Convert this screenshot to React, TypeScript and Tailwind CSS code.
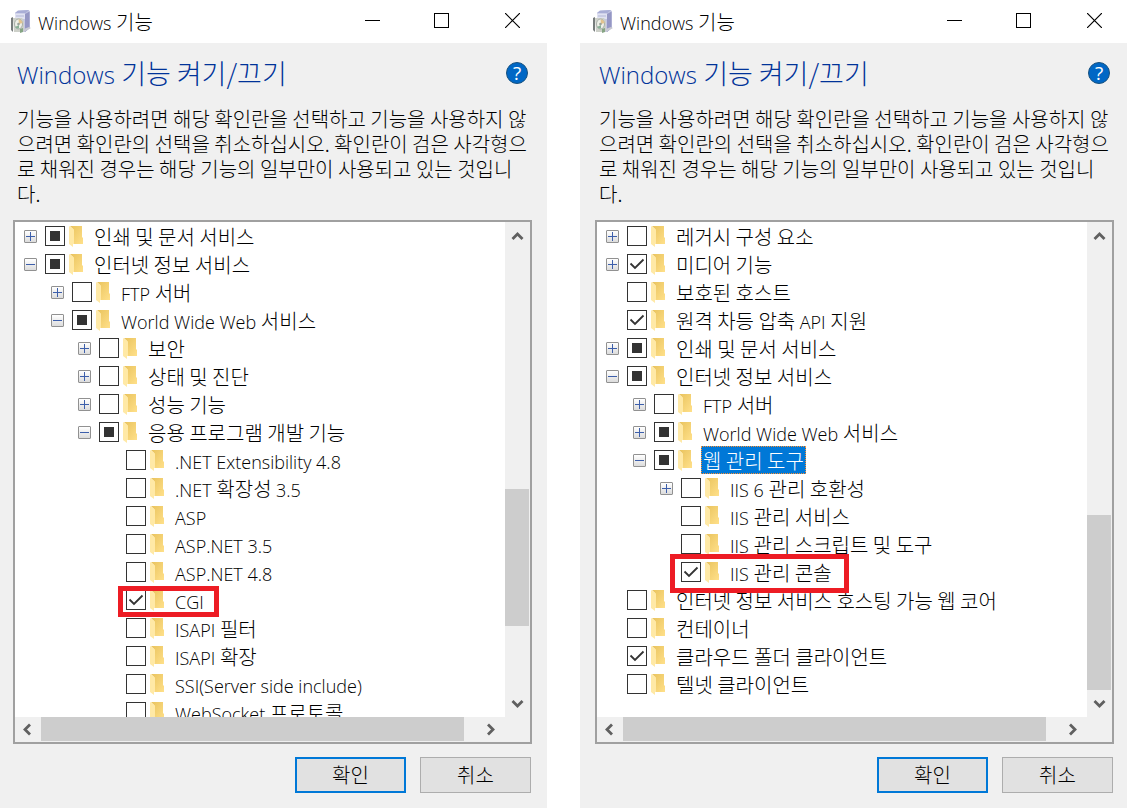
import React, { useEffect, useRef } from "react";

type State = "off" | "on" | "partial";
type Item = {
  text: string;
  level: number;
  state: State;
  toggle?: "plus" | "minus";
  selected?: boolean;
  mark?: string;
};

const leftItems: Item[] = [
  { text: "인쇄 및 문서 서비스", level: 0, state: "partial", toggle: "plus" },
  { text: "인터넷 정보 서비스", level: 0, state: "partial", toggle: "minus" },
  { text: "FTP 서버", level: 1, state: "off", toggle: "plus" },
  { text: "World Wide Web 서비스", level: 1, state: "partial", toggle: "minus" },
  { text: "보안", level: 2, state: "off", toggle: "plus" },
  { text: "상태 및 진단", level: 2, state: "off", toggle: "plus" },
  { text: "성능 기능", level: 2, state: "off", toggle: "plus" },
  { text: "응용 프로그램 개발 기능", level: 2, state: "partial", toggle: "minus" },
  { text: ".NET Extensibility 4.8", level: 3, state: "off" },
  { text: ".NET 확장성 3.5", level: 3, state: "off" },
  { text: "ASP", level: 3, state: "off" },
  { text: "ASP.NET 3.5", level: 3, state: "off" },
  { text: "ASP.NET 4.8", level: 3, state: "off" },
  { text: "CGI", level: 3, state: "on", mark: "left-[103px] top-0 h-[31px] w-[101px]" },
  { text: "ISAPI 필터", level: 3, state: "off" },
  { text: "ISAPI 확장", level: 3, state: "off" },
  { text: "SSI(Server side include)", level: 3, state: "off" },
  { text: "WebSocket 프로토콜", level: 3, state: "off" },
];

const rightItems: Item[] = [
  { text: "레거시 구성 요소", level: 0, state: "off", toggle: "plus" },
  { text: "미디어 기능", level: 0, state: "on", toggle: "plus" },
  { text: "보호된 호스트", level: 0, state: "off" },
  { text: "원격 차등 압축 API 지원", level: 0, state: "on" },
  { text: "인쇄 및 문서 서비스", level: 0, state: "partial", toggle: "plus" },
  { text: "인터넷 정보 서비스", level: 0, state: "partial", toggle: "minus" },
  { text: "FTP 서버", level: 1, state: "off", toggle: "plus" },
  { text: "World Wide Web 서비스", level: 1, state: "partial", toggle: "plus" },
  { text: "웹 관리 도구", level: 1, state: "partial", toggle: "minus", selected: true },
  { text: "IIS 6 관리 호환성", level: 2, state: "off", toggle: "plus" },
  { text: "IIS 관리 서비스", level: 2, state: "off" },
  { text: "IIS 관리 스크립트 및 도구", level: 2, state: "off" },
  { text: "IIS 관리 콘솔", level: 2, state: "on", mark: "left-[73px] -top-1 h-[39px] w-[179px]" },
  { text: "인터넷 정보 서비스 호스팅 가능 웹 코어", level: 0, state: "off" },
  { text: "컨테이너", level: 0, state: "off" },
  { text: "클라우드 폴더 클라이언트", level: 0, state: "on" },
  { text: "텔넷 클라이언트", level: 0, state: "off" },
];

const indents = ["pl-[9px]", "pl-[36px]", "pl-[63px]", "pl-[90px]"];

/* Latin runs, with the space after them, are set in a slightly smaller Latin face beside the Hangul. */
function Mixed({ text }: { text: string }) {
  const parts = text.split(/([\x21-\x7e]+(?: [\x21-\x7e]+)* ?)/);
  return (
    <>
      {parts.map((part, i) =>
        i % 2 ? (
          <span key={i} className="font-['Open_Sans',sans-serif] text-[18px] leading-none">
            {part}
          </span>
        ) : (
          part
        ),
      )}
    </>
  );
}

function AppIcon() {
  return (
    <svg width="22" height="24" viewBox="0 0 22 24" aria-hidden="true">
      <path d="M5 3 8 1l11-1 1 2v16l-5 4-10-1z" fill="#c3c5e2" />
      <path d="M5 3 8 .5 19 0l-4 3.500z" fill="#a9aed6" />
      <path d="M15 4l4.500-2.500V18l-4.500 4z" fill="#9597c4" />
      <path d="M5 3.500h10V9H5z" fill="#e0e2f2" />
      <path d="M6 6h8" stroke="#b4b8d6" />
      <path d="M1 8l2-1v15l-2-2z" fill="#777c7c" />
      <path d="M3 8h9l2 3v9l-3 2H4z" fill="#cdd0c9" />
      <ellipse cx="8.500" cy="14" rx="4" ry="5" fill="#eef0e8" stroke="#aab0aa" />
      <path d="M8.500 9.500a4 4 0 0 1 4 3.500L9 14z" fill="#e3c38d" />
      <path d="M5 17a4 4 0 0 0 4 1.500V15z" fill="#8ab197" />
      <circle cx="8.500" cy="14" r="1.300" fill="#9ba19c" />
      <path d="M11 20l8-3 2 1-7 4z" fill="#c9cad2" />
      <path d="M10 19l3-1v4l-3 1z" fill="#86a584" />
    </svg>
  );
}

function Folder() {
  return (
    <svg width="14" height="22" viewBox="0 0 14 22" className="ml-1 mr-[9px] mt-0.5 shrink-0" aria-hidden="true">
      <defs>
        <linearGradient id="folder-back" x1="0" y1="0" x2="1" y2="1">
          <stop offset="0" stopColor="#e9c35d" />
          <stop offset="1" stopColor="#ffe08a" />
        </linearGradient>
      </defs>
      <path d="M1 0h12v11l1 1v6H4V3z" fill="url(#folder-back)" />
      <path d="M0 0l5 3.500V18H4v3L0 18z" fill="#ffe9a6" />
    </svg>
  );
}

function Expander({ kind }: { kind: "plus" | "minus" }) {
  return (
    <button
      type="button"
      aria-label={kind === "plus" ? "확장" : "축소"}
      className="flex size-[13px] items-center justify-center rounded-[1px] border border-[#919191] bg-linear-to-b from-white to-[#dcdcdc]"
    >
      <svg width="11" height="11" viewBox="0 0 11 11" shapeRendering="crispEdges" aria-hidden="true">
        <path d={kind === "plus" ? "M1 5.500h9M5.500 1v9" : "M1 5.500h9"} stroke="#3d5fab" />
      </svg>
    </button>
  );
}

function Check({ id, state }: { id: string; state: State }) {
  const ref = useRef<HTMLInputElement>(null);
  useEffect(() => {
    if (ref.current) ref.current.indeterminate = state === "partial";
  }, [state]);
  return (
    <span className="grid size-5 shrink-0 place-items-center">
      <input
        ref={ref}
        id={id}
        type="checkbox"
        defaultChecked={state === "on"}
        className="peer col-start-1 row-start-1 size-5 appearance-none border border-[#333] bg-white"
      />
      <span className="pointer-events-none col-start-1 row-start-1 hidden size-[10px] bg-[#333] peer-indeterminate:block" />
      <svg
        width="20"
        height="20"
        viewBox="0 0 20 20"
        className="pointer-events-none col-start-1 row-start-1 hidden peer-checked:block"
        aria-hidden="true"
      >
        <path d="M3.500 9.500l4.500 4.500 8.500-8.500" fill="none" stroke="#333" strokeWidth="1.800" />
      </svg>
    </span>
  );
}

function Row({ item, id }: { item: Item; id: string }) {
  return (
    <li className={`relative flex h-7 items-center whitespace-nowrap ${indents[item.level]}`}>
      <span className="mr-2 w-[13px] shrink-0">{item.toggle && <Expander kind={item.toggle} />}</span>
      <Check id={id} state={item.state} />
      <Folder />
      <label
        htmlFor={id}
        className={
          item.selected
            ? "h-7 border border-dotted border-[#ff9030] bg-[#0078d7] px-px leading-7 text-white"
            : "h-7 px-0.5 leading-[30px]"
        }
      >
        <Mixed text={item.text} />
      </label>
      {item.mark && <span className={`pointer-events-none absolute z-10 border-[5px] border-[#ed1c24] ${item.mark}`} />}
    </li>
  );
}

function Arrow({ dir, label }: { dir: "up" | "down" | "left" | "right"; label: string }) {
  const paths = {
    up: "M7.500 17l5-5 5 5",
    down: "M7.500 10l5 5 5-5",
    left: "M15 7.500l-5 5 5 5",
    right: "M10 7.500l5 5-5 5",
  };
  return (
    <button type="button" aria-label={label} className="size-[25px] shrink-0">
      <svg width="25" height="25" viewBox="0 0 25 25" aria-hidden="true">
        <path d={paths[dir]} fill="none" stroke="#606060" strokeWidth="2.800" />
      </svg>
    </button>
  );
}

type WindowProps = { name: string; items: Item[]; thumb: string; edge: string };

function FeatureWindow({ name, items, thumb, edge }: WindowProps) {
  return (
    <section className="min-w-0 flex-1">
      <div className={edge}>
        <header className="flex h-[43px] items-center pl-2.5">
          <AppIcon />
          <h1 className="ml-1.5 flex-1">
            <Mixed text="Windows 기능" />
          </h1>
          <button type="button" aria-label="최소화" className="grid h-[41px] w-[61px] place-items-center self-start">
            <svg width="15" height="15" viewBox="0 0 15 15" shapeRendering="crispEdges">
              <path d="M0 7.500h15" stroke="#000" />
            </svg>
          </button>
          <button type="button" aria-label="최대화" className="grid h-[41px] w-[77px] place-items-center self-start">
            <svg width="15" height="15" viewBox="0 0 15 15" shapeRendering="crispEdges">
              <path d="M.5.5h14v14H.5z" fill="none" stroke="#000" />
            </svg>
          </button>
          <button type="button" aria-label="닫기" className="grid h-[41px] w-[65px] place-items-center self-start">
            <svg width="15" height="15" viewBox="0 0 15 15">
              <path d="M0 0l15 15M15 0L0 15" stroke="#000" strokeWidth="1.200" />
            </svg>
          </button>
        </header>
      </div>
      <div className={`bg-[#f0f0f0] ${edge}`}>
        <div className="pl-[17px] pr-[15px] pt-3">
          <div className="flex h-9 items-center justify-between pr-0.5">
            <h2 className="text-[27px] leading-9 text-[#003399]">
              <span className="font-['Open_Sans',sans-serif] text-[24px] leading-none">Windows </span>기능 켜기/끄기
            </h2>
            <button
              type="button"
              aria-label="도움말"
              className="flex size-[22px] items-center justify-center rounded-full border border-[#17517f] bg-[#0067c5] font-['Open_Sans',sans-serif] text-[19px] font-normal leading-5 text-white"
            >
              ?
            </button>
          </div>
          <p className="mt-[15px] leading-[25px]">
            기능을 사용하려면 해당 확인란을 선택하고 기능을 사용하지 않으려면 확인란의 선택을 취소하십시오. 확인란이
            검은 사각형으로 채워진 경우는 해당 기능의 일부만이 사용되고 있는 것입니다.
          </p>
        </div>
        <div className="mx-[13px] mt-[14px] border-2 border-[#a0a0a0]">
          <div className="flex h-[495px]">
            <ul className="min-w-0 flex-1 overflow-hidden bg-white">
              {items.map((item, i) => (
                <Row key={item.text} item={item} id={`${name}-${i}`} />
              ))}
            </ul>
            <div className="flex w-[25px] flex-col pb-px pr-px">
              <Arrow dir="up" label="위로" />
              <div className="flex-1">
                <div className={`bg-[#cdcdcd] ${thumb}`} />
              </div>
              <Arrow dir="down" label="아래로" />
            </div>
          </div>
          <div className="flex h-[25px] pr-[27px]">
            <Arrow dir="left" label="왼쪽으로" />
            <div className="ml-px mr-[14px] h-6 flex-1 bg-[#cdcdcd]" />
            <Arrow dir="right" label="오른쪽으로" />
          </div>
        </div>
        <footer className="flex justify-end gap-[14px] pb-[15px] pr-[14px] pt-[13px]">
          <button type="button" className="h-9 w-[111px] border-2 border-[#0078d7] bg-[#e1e1e1]">
            확인
          </button>
          <button type="button" className="h-9 w-[111px] border border-[#adadad] bg-[#e1e1e1]">
            취소
          </button>
        </footer>
      </div>
    </section>
  );
}

export default function App() {
  return (
    <main className="flex items-start gap-[33px] bg-white pr-0.5 font-['Noto_Sans_CJK_KR',sans-serif] text-[20px] font-light text-black">
      <FeatureWindow name="web" items={leftItems} thumb="mt-[242px] h-[137px]" edge="pr-0.5" />
      <FeatureWindow name="tools" items={rightItems} thumb="mt-[268px] h-[175px]" edge="pl-0.5" />
    </main>
  );
}
